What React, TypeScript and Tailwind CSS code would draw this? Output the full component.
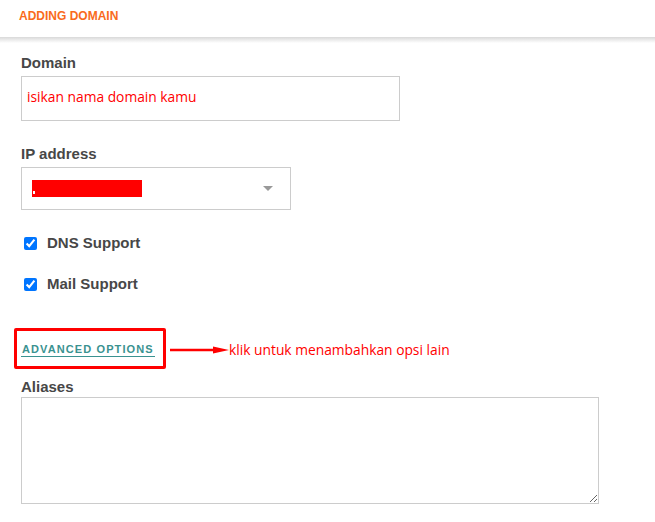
export default function App() {
  return (
    <div className="w-[655px] h-[522px] bg-white overflow-hidden font-['Liberation_Sans',Arial,sans-serif]">
      <div className="h-[37px] pl-[19px] pt-[9px]">
        <h1 className="text-[12px] leading-[14px] font-bold text-[#f96b1c]">ADDING DOMAIN</h1>
      </div>
      <div className="h-[6px] bg-gradient-to-b from-[#d9d9d9] to-white" />

      <div className="pl-[21px]">
        <label className="block mt-[11px] text-[15px] leading-[18px] font-bold text-[#474747]">Domain</label>
        <div className="mt-[4px] w-[379px] h-[45px] border border-[#cccccc] pl-[5px] pt-[8px]">
          <span className="text-[13.8px] leading-[20px] text-[#ff0000] font-['Open_Sans',sans-serif]">
            isikan nama domain kamu
          </span>
        </div>

        <label className="block mt-[24px] text-[15px] leading-[18px] font-bold text-[#474747]">IP address</label>
        <div className="mt-[4px] w-[270px] h-[43px] border border-[#cccccc] flex items-center pl-[10px] pr-[17px] justify-between">
          <div className="w-[110px] h-[17px] bg-[#ff0000] flex items-end pl-[1px] pb-[3px]">
            <span className="w-[2px] h-[3px] bg-white" />
          </div>
          <svg width="10" height="5" viewBox="0 0 10 5">
            <path d="M0 0h10L5 5z" fill="#999" />
          </svg>
        </div>

        <label className="flex items-center mt-[24px] text-[15px] leading-[18px] font-bold text-[#474747]">
          <input type="checkbox" checked readOnly className="m-0 ml-[3px] w-[13px] h-[13px] accent-[#0075ff]" />
          <span className="ml-[10px]">DNS Support</span>
        </label>
        <label className="flex items-center mt-[23px] text-[15px] leading-[18px] font-bold text-[#474747]">
          <input type="checkbox" checked readOnly className="m-0 ml-[3px] w-[13px] h-[13px] accent-[#0075ff]" />
          <span className="ml-[10px]">Mail Support</span>
        </label>

        <div className="flex items-center mt-[35px] -ml-[7px]">
          <div className="w-[152px] h-[41px] border-[3px] border-[#ff0000] rounded-[2px] pl-[4px] pt-[12px]">
            <a className="block w-fit text-[11px] leading-[12px] font-bold tracking-[1.1px] text-[#3a9290] border-b-[1.5px] border-[#3a9290] pb-[1px] pl-[1px] pr-[1px]">
              ADVANCED OPTIONS
            </a>
          </div>
          <svg width="59" height="8" viewBox="0 0 59 8" className="ml-[4px] mt-[3px]">
            <path d="M0 4h45" stroke="#ff0000" strokeWidth="2.5" />
            <path d="M43 0.5L59 4L43 7.5z" fill="#ff0000" />
          </svg>
          <span className="mt-[3px] text-[13.8px] leading-[20px] text-[#ff0000] font-['Open_Sans',sans-serif]">
            klik untuk menambahkan opsi lain
          </span>
        </div>

        <label className="block mt-[9px] text-[15px] leading-[18px] font-bold text-[#474747]">Aliases</label>
        <textarea
          readOnly
          className="block mt-[1px] w-[578px] h-[107px] border border-[#cccccc] outline-none"
        />
      </div>
    </div>
  );
}
